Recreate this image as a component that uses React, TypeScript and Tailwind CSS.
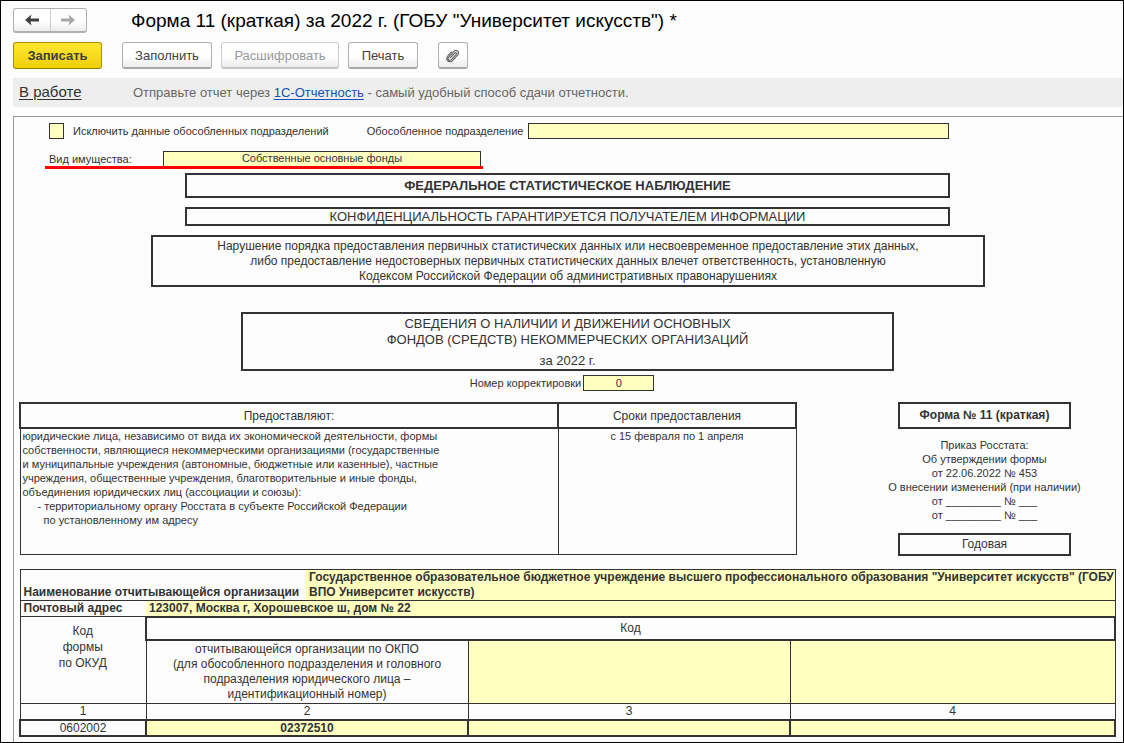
import type { ReactNode } from "react";
import clsx from "clsx";

interface ToolButtonProps {
  children: ReactNode;
  primary?: boolean;
  disabled?: boolean;
  label?: string;
  className?: string;
}

function ToolButton({
  children,
  primary,
  disabled,
  label,
  className,
}: ToolButtonProps) {
  return (
    <button
      type="button"
      disabled={disabled}
      aria-label={label}
      className={clsx(
        "flex h-[27px] items-center justify-center rounded-[3px] border text-[13px]",
        primary
          ? "border-[#a8900c] border-b-[#8f7a08] bg-linear-to-b from-[#ffe62e] to-[#f0d000] font-bold text-[#404040]"
          : "border-b-2 bg-linear-to-b from-white from-55% to-[#ececec] pt-px",
        !primary &&
          (disabled
            ? "border-[#cfcfcf] border-b-[#c4c4c4] text-[#999999]"
            : "border-[#b0b0b0] border-b-[#a8a8a8] text-[#404040]"),
        className
      )}
    >
      {children}
    </button>
  );
}

function Arrow({ back }: { back?: boolean }) {
  return (
    <svg width="16" height="12" viewBox="0 0 16 12" fill="currentColor">
      <path
        d={
          back
            ? "M1 6 L7.5 0.5 L6.5 4.5 L15 4.5 L15 7.5 L6.5 7.5 L7.5 11.5 Z"
            : "M15 6 L8.5 0.5 L9.5 4.5 L1 4.5 L1 7.5 L9.5 7.5 L8.5 11.5 Z"
        }
      />
    </svg>
  );
}

function ClipIcon() {
  return (
    <svg
      width="16"
      height="16"
      viewBox="0 0 16 16"
      fill="none"
      stroke="#666666"
      strokeWidth="1.2"
      strokeLinecap="round"
    >
      <path d="M5.2 9.9 L9.8 5 C10.9 4 12.2 5.2 11.2 6.4 L6.4 11.6 C4.4 13.4 2 11.2 3.6 9.2 L9 3.4 C11.6 1 15 4.2 12.8 6.9 L7.6 12.6 C5.4 14.6 1.2 13.6 1.9 9.6 C2.1 8.6 2.8 7.8 3.4 7.2 L6.6 3.8" />
    </svg>
  );
}

function Toolbar() {
  return (
    <header className="pl-3">
      <div className="flex items-center pt-[7px]">
        <nav className="flex h-[25px] w-[74px] rounded-[3px] border border-b-2 border-[#b0b0b0] bg-linear-to-b from-white from-55% to-[#ececec]">
          <button
            type="button"
            aria-label="Назад"
            className="flex flex-1 items-center justify-center border-r border-[#cccccc] text-[#404040]"
          >
            <Arrow back />
          </button>
          <button
            type="button"
            aria-label="Вперед"
            className="flex flex-1 items-center justify-center text-[#a6a6a6]"
          >
            <Arrow />
          </button>
        </nav>
        <h1 className="ml-11 text-[19px] leading-6 text-black">
          Форма 11 (краткая) за 2022 г. (ГОБУ "Университет искусств") *
        </h1>
      </div>
      <div className="mt-[9px] flex">
        <ToolButton primary className="w-[89px]">
          Записать
        </ToolButton>
        <ToolButton className="ml-5 w-[90px]">Заполнить</ToolButton>
        <ToolButton disabled className="ml-[9px] w-[118px]">
          Расшифровать
        </ToolButton>
        <ToolButton className="ml-[9px] w-[70px]">Печать</ToolButton>
        <ToolButton label="Файлы" className="ml-5 w-[30px]">
          <ClipIcon />
        </ToolButton>
      </div>
      <div className="mt-[9px] flex h-[29px] items-center bg-[#eeeeee] pl-1.5">
        <a href="#status" className="w-[114px] text-[15px] underline underline-offset-2">
          В работе
        </a>
        <p className="text-[13px] text-[#666666]">
          Отправьте отчет через{" "}
          <a href="#reporting" className="text-[#1a4fb4] underline underline-offset-2">
            1С-Отчетность
          </a>{" "}
          - самый удобный способ сдачи отчетности.
        </p>
      </div>
    </header>
  );
}

function Filters() {
  return (
    <div className="pl-[35px] text-[11px]">
      <div className="flex h-4 items-center">
        <input
          id="exclude"
          type="checkbox"
          className="h-4 w-[15px] appearance-none border border-[#333333] bg-[#ffffc0]"
        />
        <label htmlFor="exclude" className="ml-[9px]">
          Исключить данные обособленных подразделений
        </label>
        <label htmlFor="division" className="ml-[38px]">
          Обособленное подразделение
        </label>
        <input
          id="division"
          className="ml-[5px] mr-[174px] h-4 min-w-0 flex-1 border border-[#333333] bg-[#ffffc0] px-1"
        />
      </div>
      <div className="-ml-1 mt-3 flex h-[18px] w-[438px] border-b-3 border-[#ff0000] pl-1">
        <label htmlFor="property" className="w-[114px] leading-4">
          Вид имущества:
        </label>
        <select
          id="property"
          className="h-[15px] w-[318px] appearance-none border border-b-0 border-[#333333] bg-[#ffffc0] pb-0.5 leading-3 [text-align-last:center]"
        >
          <option>Собственные основные фонды</option>
        </select>
      </div>
    </div>
  );
}

function TitleBlocks() {
  return (
    <div className="text-center">
      <h2 className="ml-[171px] mr-[173px] mt-1 border-2 border-[#333333] text-[13px] font-bold leading-[21px]">
        ФЕДЕРАЛЬНОЕ СТАТИСТИЧЕСКОЕ НАБЛЮДЕНИЕ
      </h2>
      <p className="ml-[171px] mr-[173px] mt-[9px] border-2 border-[#333333] text-[13px] leading-[15px]">
        КОНФИДЕНЦИАЛЬНОСТЬ ГАРАНТИРУЕТСЯ ПОЛУЧАТЕЛЕМ ИНФОРМАЦИИ
      </p>
      <p className="ml-[137px] mr-[138px] mt-[9px] border-2 border-[#333333] pb-px pt-0.5 text-[12px] leading-[15px]">
        Нарушение порядка предоставления первичных статистических данных или
        несвоевременное предоставление этих данных,
        <br />
        либо предоставление недостоверных первичных статистических данных влечет
        ответственность, установленную
        <br />
        Кодексом Российской Федерации об административных правонарушениях
      </p>
      <div className="ml-[227px] mr-[229px] mt-[25px] border-2 border-[#333333] pt-0.5 text-[13px] leading-4">
        <h2>
          СВЕДЕНИЯ О НАЛИЧИИ И ДВИЖЕНИИ ОСНОВНЫХ
          <br />
          ФОНДОВ (СРЕДСТВ) НЕКОММЕРЧЕСКИХ ОРГАНИЗАЦИЙ
        </h2>
        <p className="mt-[5px]">за 2022 г.</p>
      </div>
      <div className="mr-[13px] mt-1 flex h-4 items-center justify-center gap-0.5 text-[11px]">
        <label htmlFor="correction">Номер корректировки</label>
        <input
          id="correction"
          defaultValue="0"
          className="h-4 w-[71px] border border-[#333333] bg-[#ffffc0] text-center"
        />
      </div>
    </div>
  );
}

function Submission() {
  return (
    <div className="mt-[11px] flex items-start pl-[5px]">
      <table className="min-w-0 flex-1 table-fixed border-collapse text-[11px] leading-[14px]">
        <colgroup>
          <col />
          <col className="w-[238px]" />
        </colgroup>
        <thead>
          <tr className="h-[25px] text-[12px]">
            <th className="border-2 border-[#333333] p-0 font-normal">
              Предоставляют:
            </th>
            <th className="border-2 border-[#333333] p-0 font-normal">
              Сроки предоставления
            </th>
          </tr>
        </thead>
        <tbody>
          <tr className="h-[126px] align-top">
            <td className="border border-[#333333] p-0 pl-0.5">
              юридические лица, независимо от вида их экономической деятельности,
              формы
              <br />
              собственности, являющиеся некоммерческими организациями
              (государственные
              <br />
              и муниципальные учреждения (автономные, бюджетные или казенные),
              частные
              <br />
              учреждения, общественные учреждения, благотворительные и иные фонды,
              <br />
              объединения юридических лиц (ассоциации и союзы):
              <p className="pl-[15px]">
                - территориальному органу Росстата в субъекте Российской Федерации
              </p>
              <p className="pl-[21px]">по установленному им адресу</p>
            </td>
            <td className="border border-[#333333] p-0 text-center">
              с 15 февраля по 1 апреля
            </td>
          </tr>
        </tbody>
      </table>
      <aside className="ml-[91px] mr-[42px] w-[193px] shrink-0 text-center">
        <h3 className="mx-2.5 border-2 border-[#333333] text-[12px] font-bold leading-[23px]">
          Форма № 11 (краткая)
        </h3>
        <p className="mt-[9px] whitespace-nowrap text-[11px] leading-[14px]">
          Приказ Росстата:
          <br />
          Об утверждении формы
          <br />
          от 22.06.2022 № 453
          <br />
          О внесении изменений (при наличии)
          <br />
          от _________ № ___
          <br />
          от _________ № ___
        </p>
        <p className="mx-2.5 mt-[11px] border-2 border-[#333333] text-[12px] leading-[19px]">
          Годовая
        </p>
      </aside>
    </div>
  );
}

function CellInput({ label, value }: { label: string; value?: string }) {
  return (
    <input
      aria-label={label}
      defaultValue={value}
      className="block h-[14px] w-full text-center text-[12px] font-bold"
    />
  );
}

function Organization() {
  return (
    <div className="mt-[13px] pl-[5px] pr-[7px]">
      <table className="w-full table-fixed border-collapse text-[12px] leading-[15px]">
        <colgroup>
          <col className="w-[126px]" />
          <col className="w-[159px]" />
          <col className="w-[163px]" />
          <col className="w-[322px]" />
          <col />
        </colgroup>
        <tbody>
          <tr className="h-[31px] border border-[#333333] text-left font-bold">
            <th colSpan={2} className="p-0 pl-[3px] align-bottom">
              <label htmlFor="org">Наименование отчитывающейся организации</label>
            </th>
            <td colSpan={3} className="bg-[#ffffc0] p-0 pl-1">
              <textarea
                id="org"
                rows={2}
                className="block h-[30px] w-full resize-none overflow-hidden"
                defaultValue={
                  'Государственное образовательное бюджетное учреждение высшего профессионального образования "Университет искусств" (ГОБУ ВПО Университет искусств)'
                }
              />
            </td>
          </tr>
          <tr className="h-4 border border-[#333333] text-left font-bold">
            <th className="p-0 pl-[3px]">
              <label htmlFor="address">Почтовый адрес</label>
            </th>
            <td colSpan={4} className="bg-[#ffffc0] p-0 pl-[3px]">
              <input
                id="address"
                className="block h-[14px] w-full"
                defaultValue="123007, Москва г, Хорошевское ш, дом № 22"
              />
            </td>
          </tr>
          <tr className="h-[23px] text-center">
            <td
              rowSpan={2}
              className="border border-[#333333] p-0 pt-1.5 align-top leading-4"
            >
              Код
              <br />
              формы
              <br />
              по ОКУД
            </td>
            <td colSpan={4} className="border-2 border-[#333333] p-0">
              Код
            </td>
          </tr>
          <tr className="h-16 text-center">
            <td colSpan={2} className="border border-[#333333] p-0">
              отчитывающейся организации по ОКПО
              <br />
              (для обособленного подразделения и головного
              <br />
              подразделения юридического лица –
              <br />
              идентификационный номер)
            </td>
            <td className="border border-[#333333] bg-[#ffffc0] p-0"></td>
            <td className="border border-[#333333] bg-[#ffffc0] p-0"></td>
          </tr>
          <tr className="h-4 text-center leading-[14px]">
            <td className="border border-[#333333] p-0">1</td>
            <td colSpan={2} className="border border-[#333333] p-0">
              2
            </td>
            <td className="border border-[#333333] p-0">3</td>
            <td className="border border-[#333333] p-0">4</td>
          </tr>
          <tr className="h-4 text-center leading-[14px]">
            <td className="border-2 border-[#333333] p-0">0602002</td>
            <td
              colSpan={2}
              className="border-2 border-[#333333] bg-[#ffffc0] p-0"
            >
              <CellInput label="Код по ОКПО" value="02372510" />
            </td>
            <td className="border-2 border-[#333333] bg-[#ffffc0] p-0">
              <CellInput label="Код 3" />
            </td>
            <td className="border-2 border-[#333333] bg-[#ffffc0] p-0">
              <CellInput label="Код 4" />
            </td>
          </tr>
        </tbody>
      </table>
    </div>
  );
}

export default function App() {
  return (
    <div className="flex min-h-screen flex-col border border-black bg-[#fdfdfd] font-['Liberation_Sans',Arial,sans-serif] text-[#333333]">
      <Toolbar />
      <main className="ml-3 mt-[9px] flex-1 border-l border-t border-[#999999] pb-1 pt-1.5">
        <Filters />
        <TitleBlocks />
        <Submission />
        <Organization />
      </main>
    </div>
  );
}
